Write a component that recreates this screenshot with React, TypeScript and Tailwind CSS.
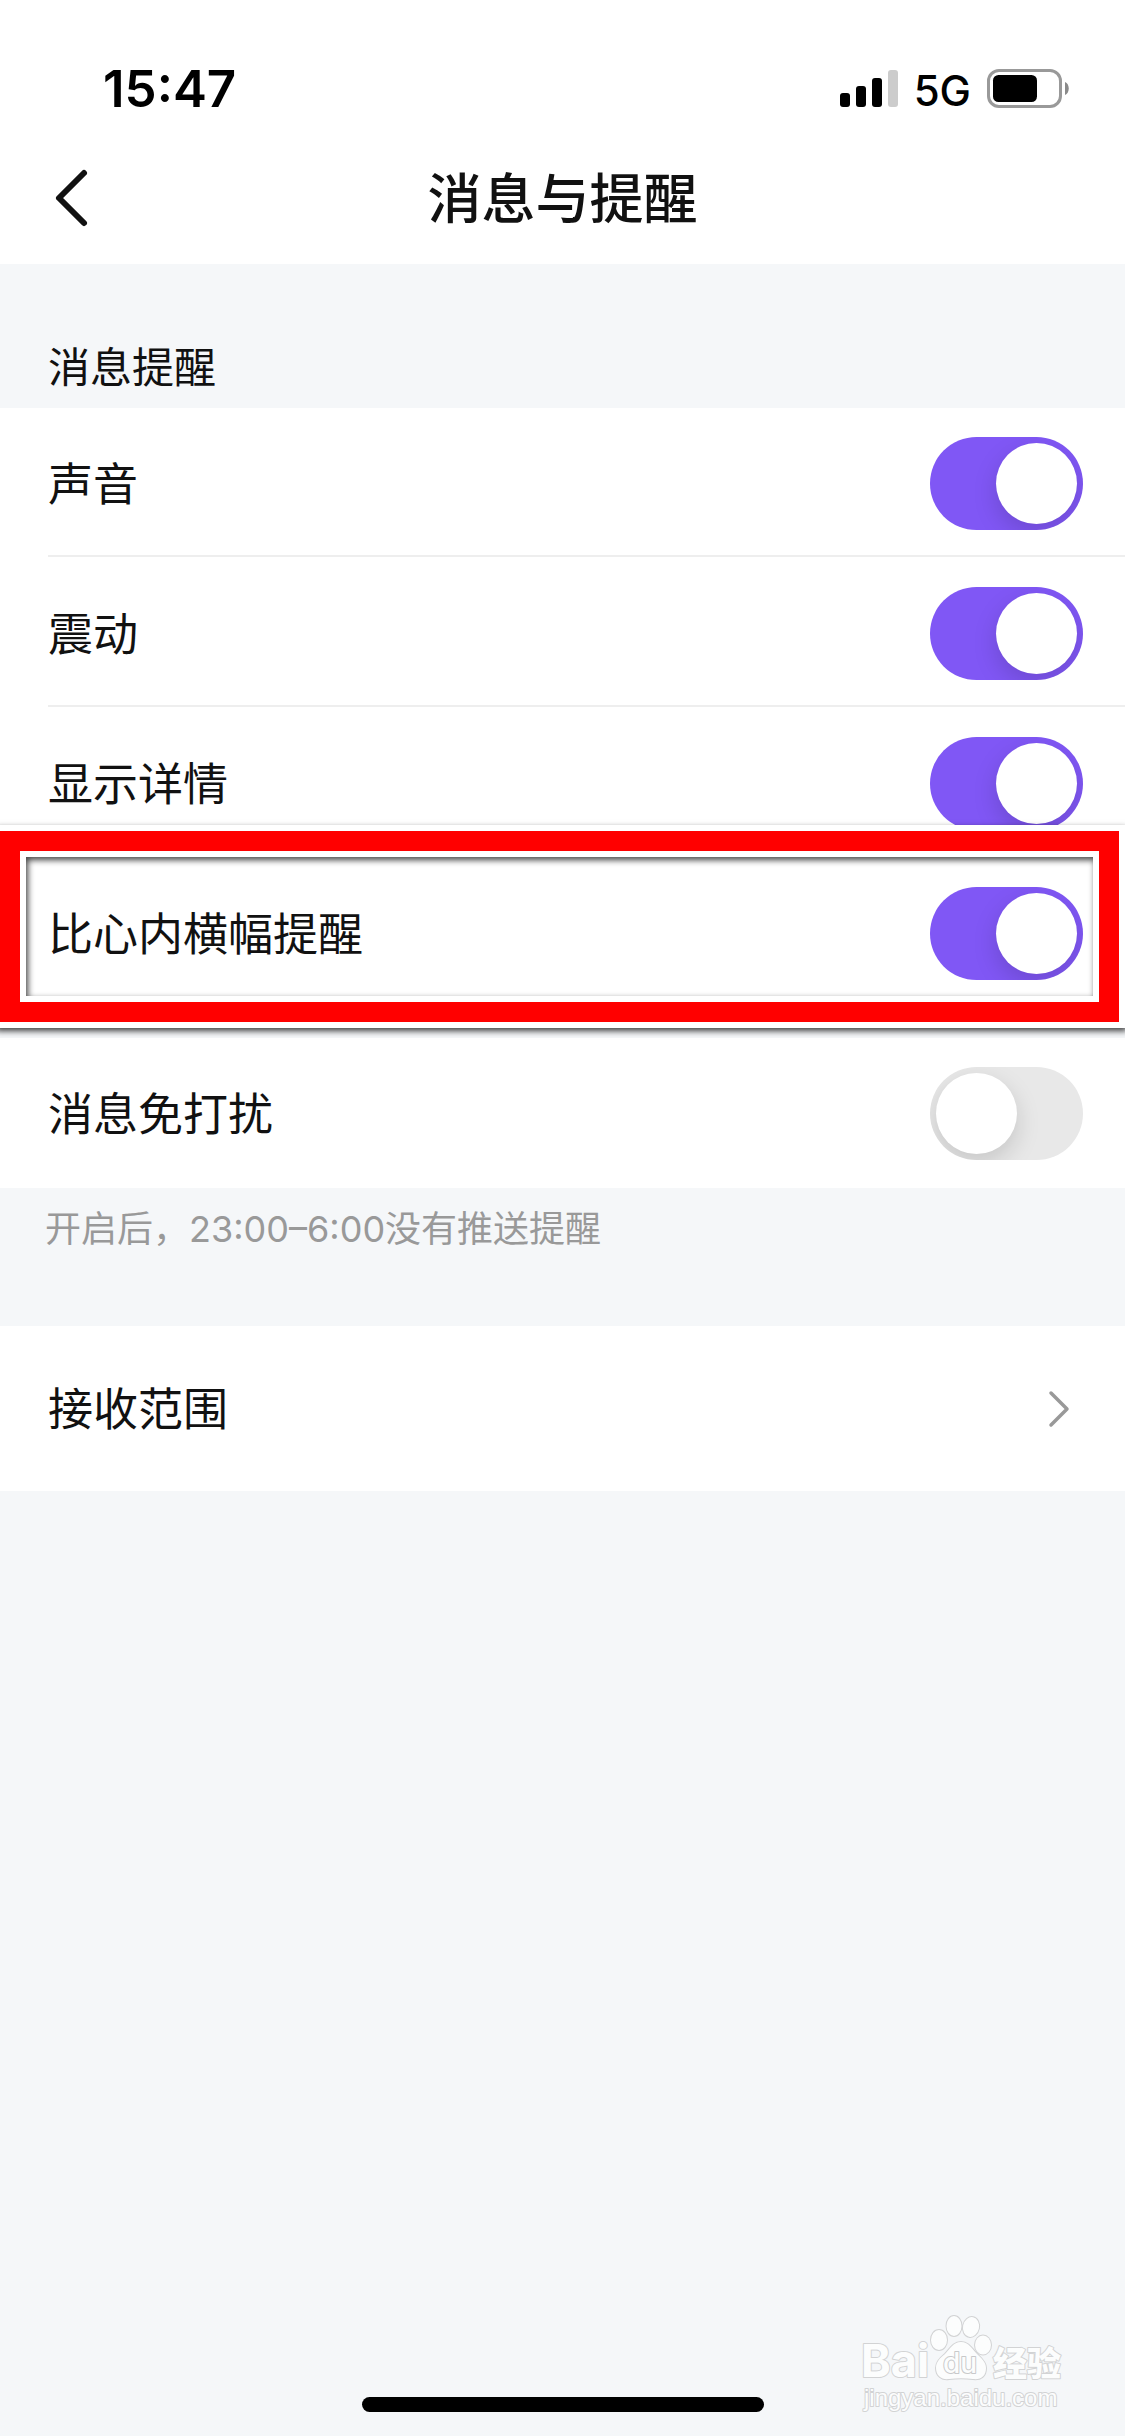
import { useState } from 'react';
import type { ReactNode } from 'react';

interface SwitchRowProps {
    id: string;
    label: string;
    checked: boolean;
    onChange: (id: string) => void;
    divider?: boolean;
    children?: ReactNode;
}

const ALERT_ROWS = [
    { id: 'sound', label: '声音' },
    { id: 'vibrate', label: '震动' },
    { id: 'detail', label: '显示详情' },
    { id: 'banner', label: '比心内横幅提醒' },
];

function SwitchRow({ id, label, checked, onChange, divider, children }: SwitchRowProps) {
    return (
        <li className="group relative pl-12">
            <div className={`flex items-center justify-between pr-[42px] pt-[30px] group-first:pt-[29px] ${divider ? 'border-b-2 border-[#eeeeee] pb-[25px]' : 'pb-7'}`}>
                <label htmlFor={id} className="pt-[3px] text-[45px] leading-[60px]">{label}</label>
                <span className="flex overflow-hidden rounded-full">
                    <input
                        id={id}
                        type="checkbox"
                        role="switch"
                        checked={checked}
                        onChange={() => onChange(id)}
                        className="flex h-[93px] w-[153px] appearance-none items-center bg-[#e8e8e8] px-1.5 before:size-[81px] before:rounded-full before:bg-white before:shadow-[0_9px_24px_rgba(0,0,0,0.15)] before:content-[''] checked:justify-end checked:bg-[#8057f5]"
                    />
                </span>
            </div>
            {children}
        </li>
    );
}

// Red frame drawn over the row that the guide points at
function HighlightFrame() {
    return (
        <div className="pointer-events-none absolute -left-1.5 -top-8 right-0 -bottom-5 flex border-6 border-white shadow-[2px_3px_6px_rgba(0,0,0,0.75)]">
            <div className="flex flex-1 border-20 border-[#ff0000]">
                <div className="flex-1 border-6 border-white shadow-[inset_2px_3px_6px_rgba(0,0,0,0.75)]" />
            </div>
        </div>
    );
}

function StatusBar() {
    return (
        <div className="flex h-[132px] items-center justify-between pl-[103px] pr-14 pt-[46px] text-black">
            <span className="text-[51px] font-semibold leading-[60px]">15:47</span>
            <div className="flex items-center gap-4">
                <svg width="58" height="38" viewBox="0 0 58 38" fill="#000">
                    <rect x="0" y="23" width="10" height="14" rx="3" />
                    <rect x="16" y="16" width="10" height="21" rx="3" />
                    <rect x="32" y="8" width="10" height="29" rx="3" />
                    <rect x="48" y="0" width="10" height="37" rx="3" fill="#cccccc" />
                </svg>
                <span className="pt-[3px] text-[42px] font-medium leading-[60px]">5G</span>
                <svg width="82" height="40" viewBox="0 0 82 40">
                    <rect x="1.5" y="1.5" width="72" height="36" rx="10.5" fill="none" stroke="#999999" strokeWidth="3" />
                    <rect x="6" y="6" width="44" height="27" rx="5.5" fill="#000" />
                    <path d="M78 13c5 2 5 11 0 13z" fill="#8a8a8a" />
                </svg>
            </div>
        </div>
    );
}

function Watermark() {
    return (
        <svg
            className="pointer-events-none absolute bottom-4 right-[55px]"
            width="215"
            height="110"
            viewBox="0 0 215 110"
            fill="#fcfdfd"
            stroke="#d2d3d4"
            strokeWidth="2"
            strokeLinejoin="round"
            paintOrder="stroke"
        >
            <text x="6" y="67" fontSize="45" fontWeight="700" fontFamily="Inter, sans-serif">Bai</text>
            <ellipse cx="84" cy="30" rx="8" ry="10" />
            <ellipse cx="99" cy="16" rx="7.5" ry="10" />
            <ellipse cx="116" cy="17" rx="8" ry="10" transform="rotate(12 116 17)" />
            <ellipse cx="128" cy="35" rx="8" ry="9.5" />
            <path d="M106 32c-8 0-11 7-16 12-5 4-9 8-9 14 0 8 6 12 13 11 8-1 16-1 24 0 8 1 13-3 13-11 0-6-5-10-9-14-5-5-8-12-16-12z" />
            <text x="88" y="63" fontSize="28" fontWeight="500" stroke="#c8c9ca" fontFamily="Inter, sans-serif">du</text>
            <text x="138" y="66" fontSize="34" fontWeight="900" fontFamily="'Noto Sans CJK SC', sans-serif">经验</text>
            <text x="9" y="96" fontSize="24" fontFamily="'Liberation Sans', sans-serif">jingyan.baidu.com</text>
        </svg>
    );
}

export default function App() {
    const [settings, setSettings] = useState<Record<string, boolean>>({
        sound: true,
        vibrate: true,
        detail: true,
        banner: true,
        mute: false,
    });

    const toggle = (id: string) => {
        setSettings((prev) => ({ ...prev, [id]: !prev[id] }));
    };

    return (
        <div className="relative flex min-h-screen flex-col overflow-hidden bg-[#f5f7f9] font-[Inter,'Noto_Sans_CJK_SC',sans-serif] text-[#111111]">
            <header className="bg-white">
                <StatusBar />
                <div className="grid h-[132px] grid-cols-[1fr_auto_1fr] items-center">
                    <button type="button" aria-label="返回" className="justify-self-start pl-[54px]">
                        <svg width="36" height="60" viewBox="0 0 36 60" fill="none" stroke="#111111" strokeWidth="6" strokeLinecap="round" strokeLinejoin="round">
                            <path d="M30 5L5 30l25 25" />
                        </svg>
                    </button>
                    <h1 className="pt-[3px] text-[54px] font-medium leading-[72px]">消息与提醒</h1>
                </div>
            </header>

            <main>
                <h2 className="flex h-36 items-end pb-[10px] pl-12 text-[42px] leading-[60px]">消息提醒</h2>
                <ul className="bg-white">
                    {ALERT_ROWS.map((row, i) => (
                        <SwitchRow
                            key={row.id}
                            id={row.id}
                            label={row.label}
                            checked={settings[row.id]}
                            onChange={toggle}
                            divider={i < ALERT_ROWS.length - 1}
                        >
                            {row.id === 'banner' && <HighlightFrame />}
                        </SwitchRow>
                    ))}
                </ul>

                <ul className="mt-[30px] bg-white">
                    <SwitchRow id="mute" label="消息免打扰" checked={settings.mute} onChange={toggle} />
                </ul>
                <p className="h-[138px] pl-[45px] pt-[11px] text-[36px] leading-[60px] text-[#999999]">
                    开启后，23:00–6:00没有推送提醒
                </p>

                <a href="#range" className="flex h-[165px] items-center justify-between bg-white pl-12 pr-[54px]">
                    <span className="pt-[3px] text-[45px] leading-[60px]">接收范围</span>
                    <svg width="24" height="40" viewBox="0 0 24 40" fill="none" stroke="#999999" strokeWidth="3.5" strokeLinecap="round" strokeLinejoin="round">
                        <path d="M4 4l16 16L4 36" />
                    </svg>
                </a>
            </main>

            <Watermark />
            <footer className="mt-auto flex justify-center pb-6">
                <div className="h-[15px] w-[402px] rounded-full bg-black" />
            </footer>
        </div>
    );
}
